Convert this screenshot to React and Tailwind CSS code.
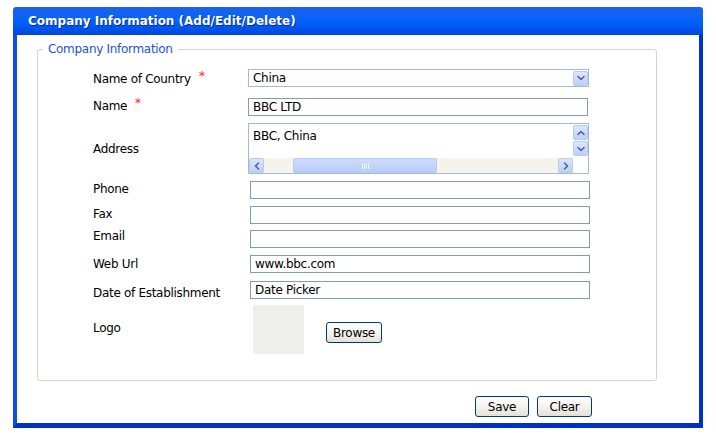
import { ChevronDown, ChevronUp, ChevronLeft, ChevronRight } from "lucide-react";

const font = { fontFamily: '"DejaVu Sans", Verdana, sans-serif' };

function ScrollBtn({ children, className = "" }) {
  return (
    <div
      className={`flex items-center justify-center w-[15px] h-[15px] rounded-[2px] border border-[#b7cbf6] bg-gradient-to-b from-[#dce6fd] to-[#bcd0fa] text-[#4d6185] ${className}`}
    >
      {children}
    </div>
  );
}

function TextInput({ value = "", className = "" }) {
  return (
    <div
      className={`h-[18px] border border-[#7f9db9] bg-white flex items-center pl-[4px] text-[12px] tracking-[-0.3px] text-black ${className}`}
    >
      {value}
    </div>
  );
}

function XpButton({ children, className = "" }) {
  return (
    <button
      className={`h-[21px] rounded-[3px] border border-[#003c74] bg-gradient-to-b from-white via-[#f4f3ee] to-[#e3e1d7] text-[12px] tracking-[-0.3px] text-black ${className}`}
    >
      {children}
    </button>
  );
}

function Row({ label, required, starX, className = "", labelClass = "", children }) {
  return (
    <div className={`flex items-center ${className}`}>
      <div className={`w-[155px] relative text-[12px] tracking-[-0.3px] text-black ${labelClass}`}>
        {label}
        {required && (
          <span className="absolute text-[#ff2020] text-[12px]" style={{ left: starX, top: -3 }}>
            *
          </span>
        )}
      </div>
      {children}
    </div>
  );
}

export default function App() {
  return (
    <div className="w-[716px] h-[434px] bg-white pt-[7px] pl-[13px]" style={font}>
      <div className="w-[690px] h-[421px] flex flex-col">
        {/* Title bar */}
        <div className="h-[28px] rounded-t-[3px] bg-gradient-to-b from-[#1a62e8] via-[#0063ff] to-[#0046db] flex items-center pl-[15px]">
          <span className="text-white font-bold text-[12px] [text-shadow:1px_1px_0_#0a2a8a]">
            Company Information (Add/Edit/Delete)
          </span>
        </div>

        {/* Body */}
        <div className="flex-1 border-l-4 border-l-[#0d4fe6] border-r-4 border-r-[#0033cc] border-b-[5px] border-b-[#0031c2] bg-white flex flex-col">
          <fieldset className="ml-[20px] mt-[6px] w-[620px] h-[340px] border border-[#d5d3c6] rounded-[3px]">
            <legend className="ml-[5px] px-[5px] text-[12px] leading-[16px] tracking-[-0.3px] text-[#1e4fd8]">
              Company Information
            </legend>

            <div className="flex flex-col pl-[55px]">
              <Row label="Name of Country" required starX={106} className="mt-[12px]" labelClass="translate-y-[1px]">
                <div className="w-[341px] h-[18px] border border-[#a5b9cf] bg-white flex items-center justify-between text-[12px] tracking-[-0.3px]">
                  <span className="pl-[4px]">China</span>
                  <ScrollBtn>
                    <ChevronDown size={12} strokeWidth={3} />
                  </ScrollBtn>
                </div>
              </Row>

              <Row label="Name" required starX={42} className="mt-[11px]" labelClass="-translate-y-[1px]">
                <TextInput value="BBC LTD" className="w-[340px]" />
              </Row>

              <Row label="Address" className="mt-[7px]">
                <div className="w-[341px] h-[51px] border border-[#a5b9cf] bg-white flex">
                  <div className="flex-1 flex flex-col">
                    <div className="flex-1 pl-[4px] pt-[3px] text-[12px] tracking-[-0.3px]">BBC, China</div>
                    <div className="h-[15px] flex bg-[#f5f4ec]">
                      <ScrollBtn>
                        <ChevronLeft size={12} strokeWidth={3} />
                      </ScrollBtn>
                      <div className="flex-1 flex pl-[29px] pr-[121px]">
                        <div className="flex-1 rounded-[2px] border border-[#b7cbf6] bg-gradient-to-b from-[#cddbfd] to-[#b9cdfa] flex items-center justify-center">
                          <div className="flex gap-[1px]">
                            <div className="w-[1px] h-[6px] bg-[#eef3ff]" />
                            <div className="w-[1px] h-[6px] bg-[#eef3ff]" />
                            <div className="w-[1px] h-[6px] bg-[#eef3ff]" />
                            <div className="w-[1px] h-[6px] bg-[#eef3ff]" />
                          </div>
                        </div>
                      </div>
                      <ScrollBtn>
                        <ChevronRight size={12} strokeWidth={3} />
                      </ScrollBtn>
                    </div>
                  </div>
                  <div className="w-[15px] flex flex-col">
                    <ScrollBtn className="mt-[1px]">
                      <ChevronUp size={12} strokeWidth={3} />
                    </ScrollBtn>
                    <ScrollBtn className="mt-[1px]">
                      <ChevronDown size={12} strokeWidth={3} />
                    </ScrollBtn>
                    <div className="flex-1 bg-white" />
                  </div>
                </div>
              </Row>

              <Row label="Phone" className="mt-[7px]" labelClass="-translate-y-[1px]">
                <TextInput className="w-[340px] ml-[2px]" />
              </Row>
              <Row label="Fax" className="mt-[7px]" labelClass="-translate-y-[1px]">
                <TextInput className="w-[340px] ml-[2px] h-[17px]" />
              </Row>
              <Row label="Email" className="mt-[6px]" labelClass="-translate-y-[3px]">
                <TextInput className="w-[340px] ml-[2px]" />
              </Row>
              <Row label="Web Url" className="mt-[7px]">
                <TextInput value="www.bbc.com" className="w-[340px] ml-[2px]" />
              </Row>
              <Row label="Date of Establishment" className="mt-[8px]" labelClass="translate-y-[3px]">
                <TextInput value="Date Picker" className="w-[340px] ml-[2px]" />
              </Row>

              <Row label="Logo" className="mt-[6px] items-start" labelClass="mt-[14px]">
                <div className="ml-[5px] w-[51px] h-[49px] bg-[#efefec]" />
                <XpButton className="ml-[22px] mt-[17px] w-[56px]">Browse</XpButton>
              </Row>
            </div>
          </fieldset>

          <div className="flex justify-start pl-[458px] mt-[15px] gap-[8px]">
            <XpButton className="w-[54px]">Save</XpButton>
            <XpButton className="w-[55px]">Clear</XpButton>
          </div>
        </div>
      </div>
    </div>
  );
}
